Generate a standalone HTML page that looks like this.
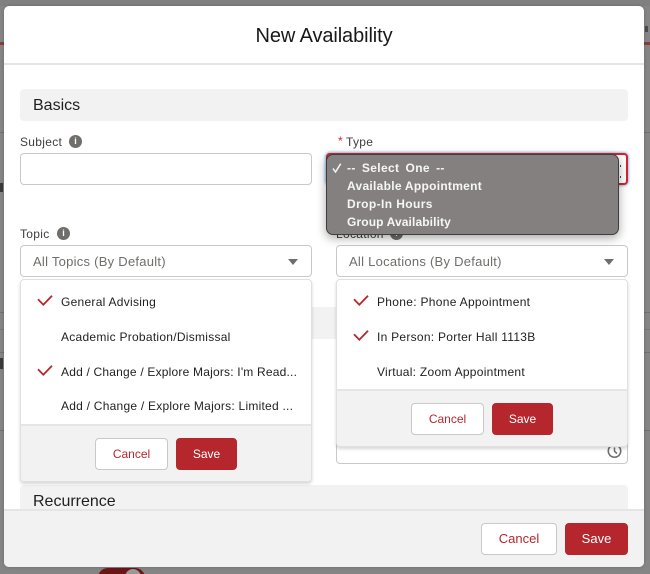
<!DOCTYPE html>
<html><head><meta charset="utf-8">
<style>
html,body{margin:0;padding:0;width:650px;height:574px;overflow:hidden}
body{background:#858585;font-family:"Liberation Sans",sans-serif;color:#1f1f1f}
div,span{position:absolute;box-sizing:border-box;white-space:nowrap}
#root{left:0;top:0;width:650px;height:574px;overflow:hidden;background:#858585}
.bgl{left:0;width:650px;height:1px;background:#707070}
.sec{background:#f2f2f2;border-radius:4px;left:20px;width:608px;font-size:16px;padding-left:13px}
.lb{font-size:12px;color:#3e3e3c;line-height:14px;letter-spacing:.3px}
.inp{background:#fff;border:1px solid #c9c9c9;border-radius:4px;height:32px}
.ph{font-size:13px;color:#706e6b;line-height:14px;letter-spacing:.26px}
.info{width:13px;height:13px;border-radius:50%;background:#706e6b;color:#fff;font:bold 9px/13px "Liberation Sans",sans-serif;text-align:center}
.car{width:0;height:0;border-left:5.5px solid transparent;border-right:5.5px solid transparent;border-top:6px solid #706e6b}
.drop{background:#fff;border:1px solid #e0e0e0;border-radius:4px;box-shadow:0 2px 3px rgba(0,0,0,.16);overflow:hidden}
.opt{font-size:12px;line-height:14px;color:#1f1f1f;letter-spacing:.27px}
.foot{background:#f2f2f2;border-top:2px solid #e5e5e5;left:0;right:0}
.btn{border-radius:4px;text-align:center;font-size:12px}
.c{background:#fff;border:1px solid #c9c9c9;color:#b5272d}
.s{background:#b5272d;color:#fff;border:1px solid #b5272d}
.sel{font-weight:bold;font-size:12px;color:#f6f6f6;line-height:14px}
svg{position:absolute}
</style></head>
<body>
<div id="root">
<div class="bgl" style="top:0;height:6px;background:#808080"></div>
<div class="bgl" style="top:42px;height:3px;background:#8f3a3a"></div>
<div class="bgl" style="top:132px"></div>
<div class="bgl" style="top:312px"></div>
<div class="bgl" style="top:329px;background:#777"></div>
<div class="bgl" style="top:352px"></div>
<div class="bgl" style="top:430px"></div>
<div style="left:0;top:183px;width:3px;height:9px;background:#222;opacity:.75"></div>
<div style="left:0;top:358px;width:3px;height:11px;background:#222;opacity:.75"></div>
<div style="left:645px;top:26px;width:3px;height:6px;background:#333;opacity:.7"></div>
<div style="left:98px;top:568px;width:47px;height:20px;border-radius:10px;background:#6d1416"></div>
<div style="left:125px;top:569px;width:16px;height:16px;border-radius:50%;background:#999"></div>

<div style="left:4px;top:6px;width:640px;height:561px;background:#fff;border-radius:5px;overflow:hidden;box-shadow:0 0 3px rgba(0,0,0,.2)">
  <div style="left:0;right:0;top:0;height:59px;border-bottom:2px solid #e5e5e5;text-align:center;font-size:20px;line-height:60px;color:#181818;letter-spacing:-.1px">New Availability</div>

  <div class="sec" style="left:16px;top:83px;height:32px;line-height:33px">Basics</div>
  <div class="lb" style="left:16px;top:129px">Subject</div>
  <div class="info" style="left:65px;top:129px">i</div>
  <div class="inp" style="left:16px;top:147px;width:292px"></div>

  <div style="left:334px;top:128px;font-size:12px;line-height:14px;color:#e3242b">*</div>
  <div class="lb" style="left:342px;top:129px">Type</div>
  <div class="inp" style="left:322px;top:147px;width:302px;border:2px solid #d8232a;box-shadow:0 0 2px 1px #8fc0ee"></div>
  <div style="left:616px;top:159px;width:1px;height:2px;background:#444"></div>
  <div style="left:616px;top:170px;width:1px;height:2px;background:#444"></div>

  <div class="lb" style="left:16px;top:221px">Topic</div>
  <div class="info" style="left:53px;top:221px">i</div>
  <div class="inp" style="left:16px;top:239px;width:292px"></div>
  <div class="ph" style="left:29px;top:249px">All Topics (By Default)</div>
  <div class="car" style="left:284px;top:253px"></div>

  <div class="inp" style="left:332px;top:239px;width:292px"></div>
  <div class="ph" style="left:345px;top:249px">All Locations (By Default)</div>
  <div class="car" style="left:600px;top:253px"></div>

  <div class="sec" style="left:16px;top:301px;height:32px"></div>
  <div class="inp" style="left:16px;top:405px;width:292px;height:53px"></div>
  <div class="inp" style="left:332px;top:405px;width:292px;height:53px"></div>
  <svg style="left:602px;top:437px" width="17" height="17" viewBox="0 0 17 17"><circle cx="8.5" cy="8" r="6.2" fill="none" stroke="#706e6b" stroke-width="1.6"/><path d="M8.5 4.5V8.3L11 10.5" fill="none" stroke="#706e6b" stroke-width="1.5"/></svg>

  <div class="sec" style="left:16px;top:479px;height:40px;line-height:33px">Recurrence</div>

  <div class="foot" style="top:503px;height:58px">
    <div class="btn c" style="left:477px;top:12px;width:76px;height:32px;font-size:13px;line-height:30px">Cancel</div>
    <div class="btn s" style="left:561px;top:12px;width:63px;height:32px;font-size:13px;line-height:30px">Save</div>
  </div>

  <!-- topic dropdown -->
  <div class="drop" style="left:16px;top:273px;width:292px;height:203px">
    <svg style="left:16px;top:15px" width="16" height="11" viewBox="0 0 16 11"><path d="M1 4.3L6.3 9.7L15 .7" fill="none" stroke="#b5272d" stroke-width="1.8"/></svg>
    <div class="opt" style="left:40px;top:15px">General Advising</div>
    <div class="opt" style="left:40px;top:50px">Academic Probation/Dismissal</div>
    <svg style="left:16px;top:85px" width="16" height="11" viewBox="0 0 16 11"><path d="M1 4.3L6.3 9.7L15 .7" fill="none" stroke="#b5272d" stroke-width="1.8"/></svg>
    <div class="opt" style="left:40px;top:85px;letter-spacing:.2px">Add / Change / Explore Majors: I'm Read...</div>
    <div class="opt" style="left:40px;top:119px;letter-spacing:.24px">Add / Change / Explore Majors: Limited ...</div>
    <div style="left:0;right:0;top:144px;height:59px;background:#f2f2f2;border-top:2px solid #e5e5e5">
      <div class="btn c" style="left:74px;top:12px;width:73px;height:32px;line-height:30px">Cancel</div>
      <div class="btn s" style="left:155px;top:12px;width:61px;height:32px;line-height:30px">Save</div>
    </div>
  </div>

  <!-- location dropdown -->
  <div class="drop" style="left:332px;top:273px;width:292px;height:168px">
    <svg style="left:16px;top:15px" width="16" height="11" viewBox="0 0 16 11"><path d="M1 4.3L6.3 9.7L15 .7" fill="none" stroke="#b5272d" stroke-width="1.8"/></svg>
    <div class="opt" style="left:40px;top:15px;letter-spacing:.3px">Phone: Phone Appointment</div>
    <svg style="left:16px;top:50px" width="16" height="11" viewBox="0 0 16 11"><path d="M1 4.3L6.3 9.7L15 .7" fill="none" stroke="#b5272d" stroke-width="1.8"/></svg>
    <div class="opt" style="left:40px;top:50px">In Person: Porter Hall 1113B</div>
    <div class="opt" style="left:40px;top:85px">Virtual: Zoom Appointment</div>
    <div style="left:0;right:0;top:109px;height:60px;background:#f2f2f2;border-top:2px solid #e5e5e5">
      <div class="btn c" style="left:74px;top:12px;width:73px;height:32px;line-height:30px">Cancel</div>
      <div class="btn s" style="left:155px;top:12px;width:61px;height:32px;line-height:30px">Save</div>
    </div>
  </div>
  <div class="lb" style="left:332px;top:221px">Location</div>
  <div class="info" style="left:386px;top:221px">i</div>

  <!-- native select popup -->
  <div style="left:322px;top:148px;width:293px;height:81px;background:#858080;border:1px solid #3f3d3d;border-radius:7px;box-shadow:0 3px 10px rgba(0,0,0,.35)">
    <svg style="left:5px;top:8px" width="10" height="10" viewBox="0 0 10 10"><path d="M1 5.5L3.5 9L8.7 .7" fill="none" stroke="#f6f6f6" stroke-width="1.5"/></svg>
    <div class="sel" style="left:20px;top:6px;letter-spacing:.35px;word-spacing:2.5px">-- Select One --</div>
    <div class="sel" style="left:20px;top:24px;letter-spacing:.28px">Available Appointment</div>
    <div class="sel" style="left:20px;top:42px;letter-spacing:.4px">Drop-In Hours</div>
    <div class="sel" style="left:20px;top:60px;letter-spacing:.12px">Group Availability</div>
  </div>
</div>
</div>
</body></html>
